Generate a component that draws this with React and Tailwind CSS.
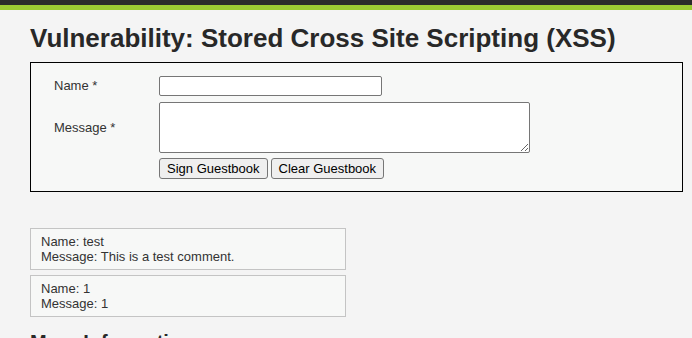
export default function App() {
    const entries = [
        { name: "test", message: "This is a test comment." },
        { name: "1", message: "1" },
    ];

    return (
        <div className="min-h-[338px] bg-[#f4f4f4] text-[#222] font-['Liberation_Sans',Arial,sans-serif] text-[13px]">
            {/* Top bars */}
            <div className="h-[5px] bg-[#2a2a2a]" />
            <div className="h-[5px] bg-[#9bc933]" />

            <div className="pl-[30px] pr-[9px]">
                <h1 className="mt-[14px] text-[26px] leading-[28px] font-bold text-[#282828]">
                    Vulnerability: Stored Cross Site Scripting (XSS)
                </h1>

                {/* Guestbook form */}
                <div className="mt-[10px] border border-black bg-[#f7f8f7] pt-[13px] pb-[12px] pl-[23px]">
                    <div className="grid grid-cols-[105px_auto] gap-y-[6px] items-center">
                        <label className="text-[#333]">Name *</label>
                        <input
                            type="text"
                            className="w-[223px] h-[20px] bg-white border border-[#767676] rounded-[2px] px-[2px] outline-none"
                        />
                        <label className="text-[#333]">Message *</label>
                        <textarea className="w-[371px] h-[51px] bg-white border border-[#767676] rounded-[2px] px-[2px] outline-none resize" />
                    </div>
                    <div className="ml-[105px] mt-[5px] flex gap-[3px]">
                        <button className="h-[21px] px-[7px] bg-[#efefef] border border-[#767676] rounded-[3px] text-[13px] text-black leading-none">
                            Sign Guestbook
                        </button>
                        <button className="h-[21px] px-[7px] bg-[#efefef] border border-[#767676] rounded-[3px] text-[13px] text-black leading-none">
                            Clear Guestbook
                        </button>
                    </div>
                </div>

                {/* Stored entries */}
                <div className="mt-[36px] flex flex-col gap-[5px] w-[316px]">
                    {entries.map((e, i) => (
                        <div key={i} className="border border-[#c4c4c4] bg-[#f7f8f7] px-[10px] py-[5px] leading-[15px] text-[#333]">
                            <div>Name: {e.name}</div>
                            <div>Message: {e.message}</div>
                        </div>
                    ))}
                </div>

                <h2 className="mt-[13px] text-[20px] leading-[24px] font-bold text-[#282828]">More Information</h2>
            </div>
        </div>
    );
}
